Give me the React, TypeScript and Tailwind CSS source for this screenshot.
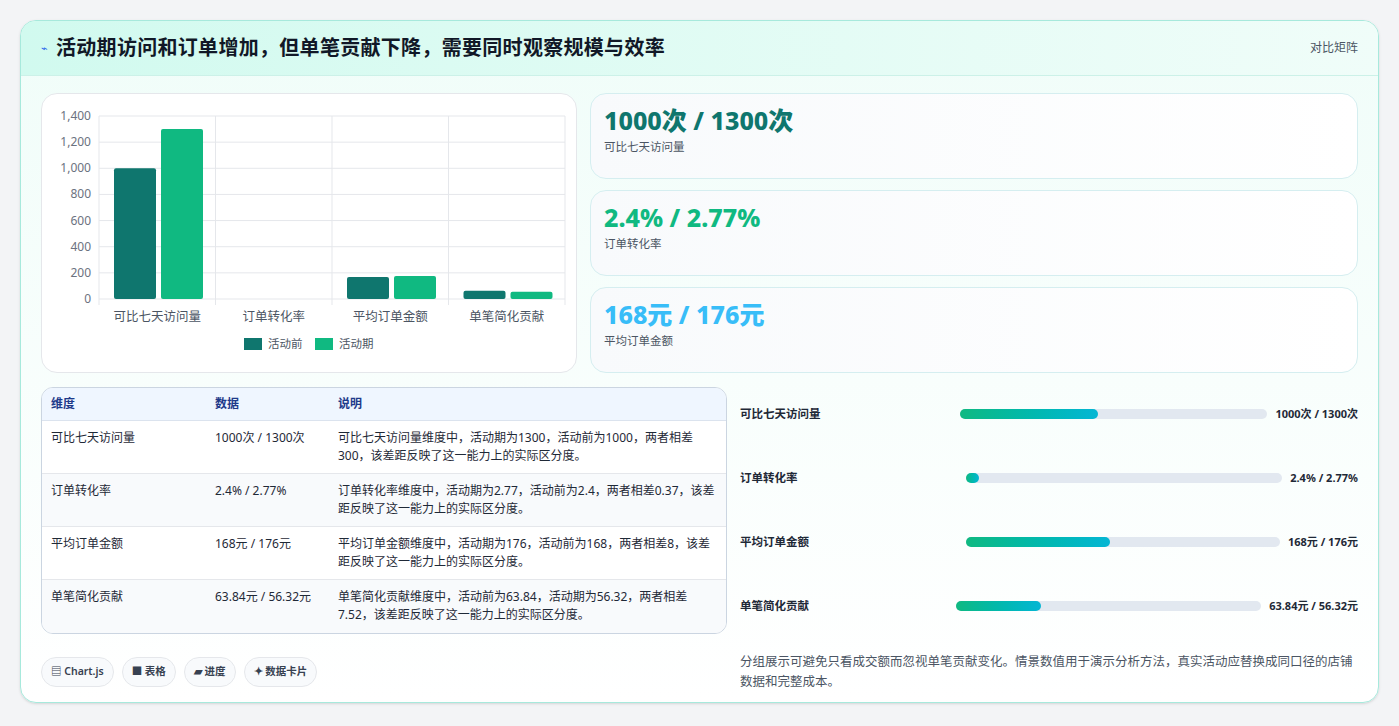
import React from "react";

const font = { fontFamily: '"Noto Sans", "Noto Sans CJK SC", sans-serif' };

const cats = ["可比七天访问量", "订单转化率", "平均订单金额", "单笔简化贡献"];
const before = [1000, 2.4, 168, 63.84];
const during = [1300, 2.77, 176, 56.32];

const Chart = () => {
  const left = 57, right = 523, top = 22, bottom = 205;
  const gw = (right - left) / 4;
  const y = (v: number) => bottom - (v / 1400) * (bottom - top);
  return (
    <svg width="535" height="279" className="block">
      {[0, 200, 400, 600, 800, 1000, 1200, 1400].map((t) => (
        <g key={t}>
          <line x1={left} x2={right} y1={y(t)} y2={y(t)} stroke="#e5e7eb" />
          <text x={left - 8} y={y(t) + 4} textAnchor="end" fontSize="12" fill="#6b7280">
            {t.toLocaleString("en-US")}
          </text>
        </g>
      ))}
      {[0, 1, 2, 3, 4].map((i) => (
        <line key={i} x1={left + i * gw} x2={left + i * gw} y1={top} y2={bottom + 6} stroke="#e5e7eb" />
      ))}
      {cats.map((c, i) => {
        const x0 = left + i * gw;
        const hb = bottom - y(before[i]);
        const hd = bottom - y(during[i]);
        return (
          <g key={c}>
            {hb > 2 && <rect x={x0 + 15} y={y(before[i])} width={42} height={hb} rx="2" fill="#0f766e" />}
            {hd > 2 && <rect x={x0 + 62} y={y(during[i])} width={42} height={hd} rx="2" fill="#10b981" />}
            <text x={x0 + gw / 2} y={227} textAnchor="middle" fontSize="12.5" fill="#4b5563">{c}</text>
          </g>
        );
      })}
      <rect x="202" y="244" width="18" height="12" fill="#0f766e" />
      <text x="226" y="254" fontSize="11.5" fill="#4b5563">活动前</text>
      <rect x="273" y="244" width="18" height="12" fill="#10b981" />
      <text x="297" y="254" fontSize="11.5" fill="#4b5563">活动期</text>
    </svg>
  );
};

const stats = [
  { v: "1000次 / 1300次", l: "可比七天访问量", c: "text-[#0f766e]" },
  { v: "2.4% / 2.77%", l: "订单转化率", c: "text-[#10b981]" },
  { v: "168元 / 176元", l: "平均订单金额", c: "text-[#38bdf8]" },
];

const rows = [
  ["可比七天访问量", "1000次 / 1300次", "可比七天访问量维度中，活动期为1300，活动前为1000，两者相差300，该差距反映了这一能力上的实际区分度。"],
  ["订单转化率", "2.4% / 2.77%", "订单转化率维度中，活动期为2.77，活动前为2.4，两者相差0.37，该差距反映了这一能力上的实际区分度。"],
  ["平均订单金额", "168元 / 176元", "平均订单金额维度中，活动期为176，活动前为168，两者相差8，该差距反映了这一能力上的实际区分度。"],
  ["单笔简化贡献", "63.84元 / 56.32元", "单笔简化贡献维度中，活动前为63.84，活动期为56.32，两者相差7.52，该差距反映了这一能力上的实际区分度。"],
];

const bars = [
  { l: "可比七天访问量", v: "1000次 / 1300次", p: 45, lw: 220 },
  { l: "订单转化率", v: "2.4% / 2.77%", p: 4, lw: 226 },
  { l: "平均订单金额", v: "168元 / 176元", p: 46, lw: 226 },
  { l: "单笔简化贡献", v: "63.84元 / 56.32元", p: 28, lw: 216 },
];

export default function App() {
  return (
    <div className="min-h-screen bg-[#f3f4f6] p-5 pb-0" style={font}>
      <div className="overflow-hidden rounded-2xl border border-[#a7e9dc] bg-gradient-to-b from-[#f0fdf9] to-white shadow-sm">
        <div className="flex h-[55px] items-center justify-between border-b border-[#ccf1e8] bg-gradient-to-r from-[#d1faef] to-[#f0fdf9] px-5">
          <div className="flex items-center gap-2">
            <span className="text-[11px] text-[#2563eb]">⌁</span>
            <h1 className="text-[20px] font-bold tracking-[0.3px] text-[#111827]">活动期访问和订单增加，但单笔贡献下降，需要同时观察规模与效率</h1>
          </div>
          <span className="text-[12px] text-[#4b5563]">对比矩阵</span>
        </div>
        <div className="px-5 pt-[17px] pb-[10px]">
          <div className="flex gap-[13px]">
            <div className="h-[280px] w-[536px] shrink-0 rounded-2xl border border-[#e5e7eb] bg-white">
              <Chart />
            </div>
            <div className="flex flex-1 flex-col gap-[11px]">
              {stats.map((s) => (
                <div key={s.l} className="h-[86px] rounded-2xl border border-[#d5eef0] bg-gradient-to-r from-[#f8fafc] to-white px-[13px] pt-[10px]">
                  <div className={`text-[25px] font-extrabold leading-[32px] ${s.c}`}>{s.v}</div>
                  <div className="mt-[2px] text-[11.5px] text-[#4b5563]">{s.l}</div>
                </div>
              ))}
            </div>
          </div>
          <div className="mt-[14px] flex gap-[13px]">
            <div className="w-[686px] shrink-0">
              <div className="overflow-hidden rounded-xl border border-[#cbd5e1] bg-white text-[12px] text-[#1f2937]">
                <div className="flex h-[33px] items-center border-b border-[#dbe3ee] bg-[#eff6ff] font-semibold text-[#1e3a8a]">
                  <div className="w-[173px] pl-[9px]">维度</div>
                  <div className="w-[123px]">数据</div>
                  <div className="flex-1">说明</div>
                </div>
                {rows.map((r, i) => (
                  <div key={r[0]} className={`flex h-[53px] pt-[8px] ${i < 3 ? "border-b border-[#e5e7eb]" : ""} ${i % 2 ? "bg-[#f8fafc]" : "bg-white"}`}>
                    <div className="w-[173px] pl-[9px]">{r[0]}</div>
                    <div className="w-[123px]">{r[1]}</div>
                    <div className="flex-1 pr-2 leading-[18px]">{r[2]}</div>
                  </div>
                ))}
              </div>
              <div className="mt-[23px] flex gap-2">
                {["▤ Chart.js", "■ 表格", "▰ 进度", "✦ 数据卡片"].map((c) => (
                  <span key={c} className="rounded-full border border-[#e5e7eb] bg-[#f8fafc] px-[9px] py-[6px] text-[10.5px] font-semibold text-[#374151]">{c}</span>
                ))}
              </div>
            </div>
            <div className="flex flex-1 flex-col">
              <div className="-mt-[5px] flex flex-col">
                {bars.map((b) => (
                  <div key={b.l} className="flex h-[64px] items-center">
                    <div className="shrink-0 text-[11.5px] font-semibold text-[#1f2937]" style={{ width: b.lw }}>{b.l}</div>
                    <div className="h-[10px] flex-1 rounded-full bg-[#e2e8f0]">
                      <div className="h-full rounded-full bg-gradient-to-r from-[#10b981] to-[#06b6d4]" style={{ width: `${b.p}%`, minWidth: 10 }} />
                    </div>
                    <div className="ml-[8px] shrink-0 text-[11px] font-bold text-[#1f2937]">{b.v}</div>
                  </div>
                ))}
              </div>
              <p className="mt-[14px] text-[12.5px] leading-[20px] text-[#4b5563]">
                分组展示可避免只看成交额而忽视单笔贡献变化。情景数值用于演示分析方法，真实活动应替换成同口径的店铺数据和完整成本。
              </p>
            </div>
          </div>
        </div>
      </div>
    </div>
  );
}
